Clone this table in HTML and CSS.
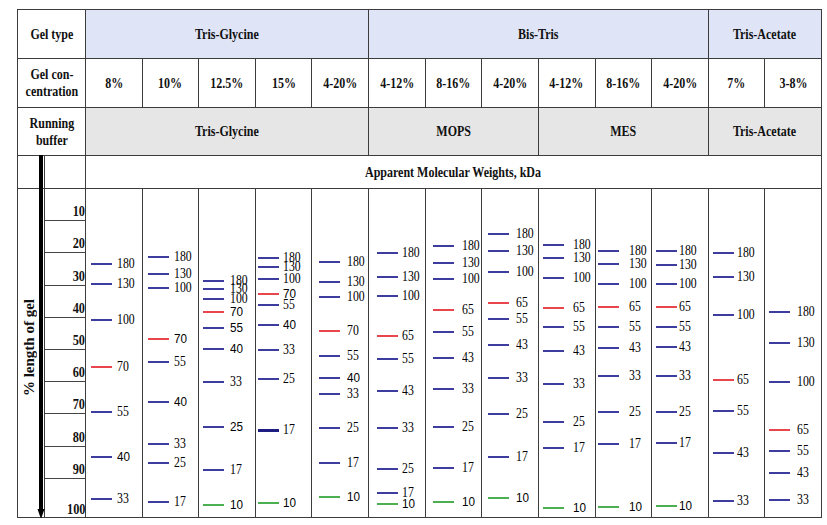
FILE: index.html
```html
<!DOCTYPE html>
<html lang="en">
<head>
<meta charset="utf-8">
<title>Protein marker migration chart</title>
<link rel="stylesheet" href="styles.css">
</head>
<body>
<div class="sheet">
  <!-- row 1 -->
  <div class="cell hd"><span class="t">Gel type</span></div>
  <div class="cell blue span5"><span class="t">Tris-Glycine</span></div>
  <div class="cell blue span6"><span class="t">Bis-Tris</span></div>
  <div class="cell blue span2"><span class="t">Tris-Acetate</span></div>
  <!-- row 2 -->
  <div class="cell hd"><span class="t">Gel con-<br>centration</span></div>
  <div class="cell"><span class="t">8%</span></div>
  <div class="cell"><span class="t">10%</span></div>
  <div class="cell"><span class="t">12.5%</span></div>
  <div class="cell"><span class="t">15%</span></div>
  <div class="cell"><span class="t">4-20%</span></div>
  <div class="cell"><span class="t">4-12%</span></div>
  <div class="cell"><span class="t">8-16%</span></div>
  <div class="cell"><span class="t">4-20%</span></div>
  <div class="cell"><span class="t">4-12%</span></div>
  <div class="cell"><span class="t">8-16%</span></div>
  <div class="cell"><span class="t">4-20%</span></div>
  <div class="cell"><span class="t">7%</span></div>
  <div class="cell"><span class="t">3-8%</span></div>
  <!-- row 3 -->
  <div class="cell hd"><span class="t">Running<br>buffer</span></div>
  <div class="cell grey span5"><span class="t">Tris-Glycine</span></div>
  <div class="cell grey span3"><span class="t">MOPS</span></div>
  <div class="cell grey span3"><span class="t">MES</span></div>
  <div class="cell grey span2"><span class="t">Tris-Acetate</span></div>
  <!-- row 4 -->
  <div class="cell"></div>
  <div class="cell"></div>
  <div class="cell span13"><span class="t">Apparent Molecular Weights, kDa</span></div>
  <!-- row 5 -->
  <div class="cell ycell"><span class="ylabel">% length of gel</span></div>
  <div class="scale">
    <div class="tick"><span>10</span></div>
    <div class="tick"><span>20</span></div>
    <div class="tick"><span>30</span></div>
    <div class="tick"><span>40</span></div>
    <div class="tick"><span>50</span></div>
    <div class="tick"><span>60</span></div>
    <div class="tick"><span>70</span></div>
    <div class="tick"><span>80</span></div>
    <div class="tick"><span>90</span></div>
    <div class="tick last"><span>100</span></div>
  </div>

  <div class="lane" style="--lx:5px;--tx:31px">
    <div class="b" style="top:75px"><i></i><span>180</span></div>
    <div class="b" style="top:95px"><i></i><span>130</span></div>
    <div class="b" style="top:131px"><i></i><span>100</span></div>
    <div class="b r" style="top:178px"><i></i><span>70</span></div>
    <div class="b" style="top:223px"><i></i><span>55</span></div>
    <div class="b s" style="top:268px"><i></i><span>40</span></div>
    <div class="b" style="top:310px"><i></i><span>33</span></div>
  </div>
  <div class="lane" style="--lx:5px;--tx:31px">
    <div class="b" style="top:68px"><i></i><span>180</span></div>
    <div class="b" style="top:85px"><i></i><span>130</span></div>
    <div class="b" style="top:99px"><i></i><span>100</span></div>
    <div class="b r s" style="top:150px"><i></i><span>70</span></div>
    <div class="b" style="top:173px"><i></i><span>55</span></div>
    <div class="b s" style="top:213px"><i></i><span>40</span></div>
    <div class="b" style="top:255px"><i></i><span>33</span></div>
    <div class="b" style="top:274px"><i></i><span>25</span></div>
    <div class="b" style="top:313px"><i></i><span>17</span></div>
  </div>
  <div class="lane" style="--lx:4px;--tx:31px">
    <div class="b" style="top:92px"><i></i><span>180</span></div>
    <div class="b" style="top:100px"><i></i><span>130</span></div>
    <div class="b" style="top:110px"><i></i><span>100</span></div>
    <div class="b r s" style="top:123px"><i></i><span>70</span></div>
    <div class="b s" style="top:139px"><i></i><span>55</span></div>
    <div class="b s" style="top:160px"><i></i><span>40</span></div>
    <div class="b" style="top:193px"><i></i><span>33</span></div>
    <div class="b s" style="top:238px"><i></i><span>25</span></div>
    <div class="b" style="top:281px"><i></i><span>17</span></div>
    <div class="b g s" style="top:316px"><i></i><span>10</span></div>
  </div>
  <div class="lane" style="--lx:2px;--tx:27px">
    <div class="b" style="top:69px"><i></i><span>180</span></div>
    <div class="b" style="top:78px"><i></i><span>130</span></div>
    <div class="b" style="top:90px"><i></i><span>100</span></div>
    <div class="b r s" style="top:105px"><i></i><span>70</span></div>
    <div class="b" style="top:116px"><i></i><span>55</span></div>
    <div class="b s" style="top:136px"><i></i><span>40</span></div>
    <div class="b" style="top:161px"><i></i><span>33</span></div>
    <div class="b" style="top:190px"><i></i><span>25</span></div>
    <div class="b d" style="top:241px"><i></i><span>17</span></div>
    <div class="b g s" style="top:314px"><i></i><span>10</span></div>
  </div>
  <div class="lane" style="--lx:7px;--tx:35px">
    <div class="b" style="top:73px"><i></i><span>180</span></div>
    <div class="b" style="top:93px"><i></i><span>130</span></div>
    <div class="b" style="top:108px"><i></i><span>100</span></div>
    <div class="b r" style="top:142px"><i></i><span>70</span></div>
    <div class="b" style="top:167px"><i></i><span>55</span></div>
    <div class="b s" style="top:189px"><i></i><span>40</span></div>
    <div class="b" style="top:205px"><i></i><span>33</span></div>
    <div class="b" style="top:239px"><i></i><span>25</span></div>
    <div class="b" style="top:274px"><i></i><span>17</span></div>
    <div class="b g s" style="top:308px"><i></i><span>10</span></div>
  </div>
  <div class="lane" style="--lx:8px;--tx:33px">
    <div class="b" style="top:64px"><i></i><span>180</span></div>
    <div class="b" style="top:88px"><i></i><span>130</span></div>
    <div class="b" style="top:107px"><i></i><span>100</span></div>
    <div class="b r" style="top:147px"><i></i><span>65</span></div>
    <div class="b" style="top:170px"><i></i><span>55</span></div>
    <div class="b" style="top:202px"><i></i><span>43</span></div>
    <div class="b" style="top:239px"><i></i><span>33</span></div>
    <div class="b" style="top:280px"><i></i><span>25</span></div>
    <div class="b" style="top:304px"><i></i><span>17</span></div>
    <div class="b g s" style="top:315px"><i></i><span>10</span></div>
  </div>
  <div class="lane" style="--lx:7px;--tx:36px">
    <div class="b" style="top:57px"><i></i><span>180</span></div>
    <div class="b" style="top:74px"><i></i><span>130</span></div>
    <div class="b" style="top:90px"><i></i><span>100</span></div>
    <div class="b r" style="top:121px"><i></i><span>65</span></div>
    <div class="b" style="top:143px"><i></i><span>55</span></div>
    <div class="b" style="top:169px"><i></i><span>43</span></div>
    <div class="b" style="top:200px"><i></i><span>33</span></div>
    <div class="b" style="top:238px"><i></i><span>25</span></div>
    <div class="b" style="top:279px"><i></i><span>17</span></div>
    <div class="b g s" style="top:313px"><i></i><span>10</span></div>
  </div>
  <div class="lane" style="--lx:6px;--tx:34px">
    <div class="b" style="top:45px"><i></i><span>180</span></div>
    <div class="b" style="top:62px"><i></i><span>130</span></div>
    <div class="b" style="top:83px"><i></i><span>100</span></div>
    <div class="b r" style="top:114px"><i></i><span>65</span></div>
    <div class="b" style="top:130px"><i></i><span>55</span></div>
    <div class="b" style="top:156px"><i></i><span>43</span></div>
    <div class="b" style="top:189px"><i></i><span>33</span></div>
    <div class="b" style="top:225px"><i></i><span>25</span></div>
    <div class="b" style="top:268px"><i></i><span>17</span></div>
    <div class="b g s" style="top:309px"><i></i><span>10</span></div>
  </div>
  <div class="lane" style="--lx:4px;--tx:34px">
    <div class="b" style="top:56px"><i></i><span>180</span></div>
    <div class="b" style="top:69px"><i></i><span>130</span></div>
    <div class="b" style="top:89px"><i></i><span>100</span></div>
    <div class="b r" style="top:119px"><i></i><span>65</span></div>
    <div class="b" style="top:138px"><i></i><span>55</span></div>
    <div class="b" style="top:162px"><i></i><span>43</span></div>
    <div class="b" style="top:195px"><i></i><span>33</span></div>
    <div class="b" style="top:233px"><i></i><span>25</span></div>
    <div class="b" style="top:259px"><i></i><span>17</span></div>
    <div class="b g s" style="top:319px"><i></i><span>10</span></div>
  </div>
  <div class="lane" style="--lx:2px;--tx:33px">
    <div class="b" style="top:62px"><i></i><span>180</span></div>
    <div class="b" style="top:75px"><i></i><span>130</span></div>
    <div class="b" style="top:95px"><i></i><span>100</span></div>
    <div class="b r" style="top:118px"><i></i><span>65</span></div>
    <div class="b" style="top:138px"><i></i><span>55</span></div>
    <div class="b" style="top:159px"><i></i><span>43</span></div>
    <div class="b" style="top:187px"><i></i><span>33</span></div>
    <div class="b" style="top:223px"><i></i><span>25</span></div>
    <div class="b" style="top:255px"><i></i><span>17</span></div>
    <div class="b g s" style="top:318px"><i></i><span>10</span></div>
  </div>
  <div class="lane" style="--lx:4px;--tx:27px">
    <div class="b" style="top:62px"><i></i><span>180</span></div>
    <div class="b" style="top:76px"><i></i><span>130</span></div>
    <div class="b" style="top:95px"><i></i><span>100</span></div>
    <div class="b r" style="top:118px"><i></i><span>65</span></div>
    <div class="b" style="top:138px"><i></i><span>55</span></div>
    <div class="b" style="top:158px"><i></i><span>43</span></div>
    <div class="b" style="top:187px"><i></i><span>33</span></div>
    <div class="b" style="top:223px"><i></i><span>25</span></div>
    <div class="b" style="top:254px"><i></i><span>17</span></div>
    <div class="b g s" style="top:317px"><i></i><span>10</span></div>
  </div>
  <div class="lane" style="--lx:4px;--tx:28px">
    <div class="b" style="top:64px"><i></i><span>180</span></div>
    <div class="b" style="top:88px"><i></i><span>130</span></div>
    <div class="b" style="top:126px"><i></i><span>100</span></div>
    <div class="b r" style="top:191px"><i></i><span>65</span></div>
    <div class="b" style="top:222px"><i></i><span>55</span></div>
    <div class="b" style="top:264px"><i></i><span>43</span></div>
    <div class="b" style="top:312px"><i></i><span>33</span></div>
  </div>
  <div class="lane" style="--lx:4px;--tx:32px">
    <div class="b" style="top:123px"><i></i><span>180</span></div>
    <div class="b" style="top:154px"><i></i><span>130</span></div>
    <div class="b" style="top:193px"><i></i><span>100</span></div>
    <div class="b r" style="top:241px"><i></i><span>65</span></div>
    <div class="b" style="top:262px"><i></i><span>55</span></div>
    <div class="b" style="top:284px"><i></i><span>43</span></div>
    <div class="b" style="top:311px"><i></i><span>33</span></div>
  </div>

  <svg class="arrow" width="10" height="364" viewBox="0 0 10 364" aria-hidden="true">
    <rect x="3" y="0" width="4" height="356" fill="#000"/>
    <path d="M1.5 354 L8.5 354 L5 364 Z" fill="#000"/>
  </svg>
</div>
</body>
</html>
```

FILE: styles.css
```css
html, body {
  margin: 0;
  padding: 0;
  background: #ffffff;
}

body {
  font-family: "Liberation Serif", "Times New Roman", serif;
  color: #111111;
}

.sheet {
  position: relative;
  margin: 9px 0 0 17px;
  width: 805px;
  height: 509px;
  box-sizing: border-box;
  padding: 1px;
  gap: 1px;
  background: #3c3c3c;
  display: grid;
  grid-template-columns: 26px 40px repeat(13, 1fr);
  grid-template-rows: 48px 48px 47px 32px 328px;
}

.cell {
  background: #ffffff;
  display: flex;
  align-items: center;
  justify-content: center;
  text-align: center;
  font-weight: bold;
  font-size: 15px;
  line-height: 17px;
}

.hd { grid-column: 1 / 3; }
.span2 { grid-column: span 2; }
.span3 { grid-column: span 3; }
.span5 { grid-column: span 5; }
.span6 { grid-column: span 6; }
.span13 { grid-column: span 13; }

.blue { background: #dfe5f6; }
.grey { background: #e6e6e6; }

.t {
  display: inline-block;
  white-space: nowrap;
  transform: scaleX(0.8);
}

/* vertical axis label */
.ycell {
  padding-bottom: 11px;
}

.ylabel {
  writing-mode: vertical-rl;
  transform: rotate(180deg);
  white-space: nowrap;
  font-size: 15px;
  line-height: 15px;
  margin-right: 3px;
}

/* % scale */
.scale {
  background: #ffffff;
  display: flex;
  flex-direction: column;
}

.tick {
  height: 32.2px;
  flex: none;
  box-sizing: border-box;
  border-bottom: 1px solid #444444;
  display: flex;
  align-items: flex-end;
  justify-content: flex-end;
  padding: 0 0 1px 0;
  font-weight: bold;
  font-size: 15px;
  line-height: 15px;
}

.tick span {
  display: inline-block;
  transform: scaleX(0.82);
  transform-origin: right bottom;
}

.tick.last {
  flex: 1;
  height: auto;
  border-bottom: none;
  padding-bottom: 0;
}

/* gel lanes */
.lane {
  position: relative;
  background: #ffffff;
}

.b {
  position: absolute;
  left: 0;
  width: 100%;
  height: 0;
}

.b i {
  position: absolute;
  left: var(--lx);
  top: -1px;
  width: 21px;
  height: 2px;
  background: #3d3d9f;
}

.b span {
  position: absolute;
  left: var(--tx);
  top: -8px;
  font-size: 14px;
  line-height: 16px;
  color: #000000;
  white-space: nowrap;
  transform: scaleX(0.84);
  transform-origin: left center;
}

.b.s span {
  font-family: "Liberation Sans", Arial, sans-serif;
  font-size: 13px;
  transform: scaleX(0.9);
}

.b.r i { background: #e8454d; }
.b.g i { background: #4caf50; }
.b.d i { background: #1e1e82; height: 3px; top: -1.5px; }

/* the arrow that runs down the length of gel */
.arrow {
  position: absolute;
  left: 18.5px;
  top: 146px;
}
```
